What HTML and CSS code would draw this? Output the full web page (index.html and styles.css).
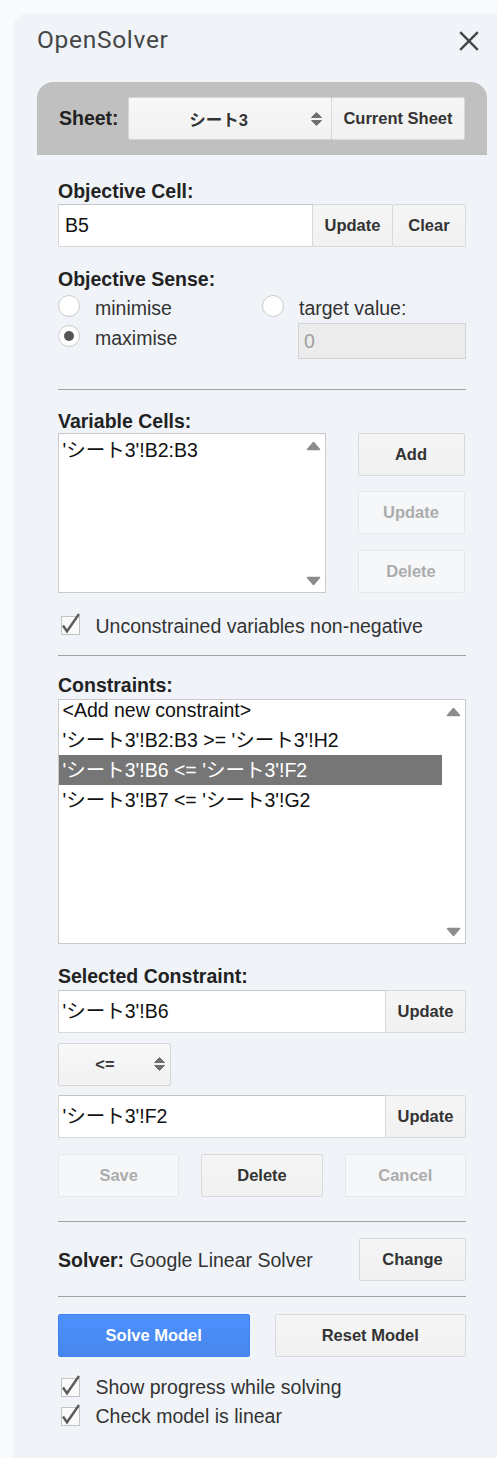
FILE: index.html
```html
<!DOCTYPE html>
<html lang="ja">
<head>
<meta charset="utf-8">
<title>OpenSolver</title>
<link rel="stylesheet" href="styles.css">
</head>
<body>
<div class="page">
  <div class="panel">
    <header class="titlebar">
      <h1 class="title">OpenSolver</h1>
      <svg class="close" width="20" height="20" viewBox="0 0 20 20"><path d="M1.2 1.2L18.8 18.8M18.8 1.2L1.2 18.8" stroke="#444746" stroke-width="2.4" fill="none"/></svg>
    </header>

    <div class="sheetbar">
      <span class="sheet-label">Sheet:</span>
      <div class="select sheet-select">
        <span class="select-text">シート3</span>
        <svg class="sel-arrows" width="13" height="16" viewBox="0 0 13 16"><path d="M6.5 1.5L11.5 6.5L1.5 6.5Z M1.5 9.5L11.5 9.5L6.5 14.5Z" fill="#707070" stroke="#707070" stroke-width="1" stroke-linejoin="round"/></svg>
      </div>
      <button class="btn sheet-btn">Current Sheet</button>
    </div>

    <main class="content">
      <div class="label">Objective Cell:</div>
      <div class="field-row obj-row">
        <div class="input input-b5">B5</div>
        <button class="btn w81">Update</button>
        <button class="btn w74">Clear</button>
      </div>

      <div class="label sense-label">Objective Sense:</div>
      <div class="sense">
        <div class="opt"><span class="radio"></span><span class="opt-text">minimise</span></div>
        <div class="opt"><span class="radio"></span><span class="opt-text">target value:</span></div>
        <div class="opt"><span class="radio checked"></span><span class="opt-text">maximise</span></div>
        <div class="target-input">0</div>
      </div>

      <hr class="divider d1">

      <div class="label var-label">Variable Cells:</div>
      <div class="var-row">
        <div class="listbox var-list">
          <div class="items var-items">
            <div class="item">'シート3'!B2:B3</div>
          </div>
          <div class="scroll">
            <svg width="15" height="10" viewBox="0 0 15 10"><path d="M7.5 1.5L13.5 8.5L1.5 8.5Z" fill="#8c8c8c" stroke="#8c8c8c" stroke-width="1.6" stroke-linejoin="round"/></svg>
            <svg width="15" height="10" viewBox="0 0 15 10"><path d="M1.5 1.5L13.5 1.5L7.5 8.5Z" fill="#8c8c8c" stroke="#8c8c8c" stroke-width="1.6" stroke-linejoin="round"/></svg>
          </div>
        </div>
        <div class="var-buttons">
          <button class="btn">Add</button>
          <button class="btn disabled">Update</button>
          <button class="btn disabled">Delete</button>
        </div>
      </div>

      <div class="check check-single">
        <svg class="cb" width="22" height="24" viewBox="0 0 22 24"><rect x="1.5" y="5.5" width="18" height="18" fill="#fafafa" stroke="#c4c4c4"/><path d="M3 14.5L7 20.3L19 3" fill="none" stroke="#5c5c5c" stroke-width="2.4"/></svg>
        <span class="opt-text">Unconstrained variables non-negative</span>
      </div>

      <hr class="divider d2">

      <div class="label con-label">Constraints:</div>
      <div class="listbox con-list">
        <div class="items con-items">
          <div class="item">&lt;Add new constraint&gt;</div>
          <div class="item">'シート3'!B2:B3 &gt;= 'シート3'!H2</div>
          <div class="item selected">'シート3'!B6 &lt;= 'シート3'!F2</div>
          <div class="item">'シート3'!B7 &lt;= 'シート3'!G2</div>
        </div>
        <div class="scroll">
          <svg width="15" height="10" viewBox="0 0 15 10"><path d="M7.5 1.5L13.5 8.5L1.5 8.5Z" fill="#8c8c8c" stroke="#8c8c8c" stroke-width="1.6" stroke-linejoin="round"/></svg>
          <svg width="15" height="10" viewBox="0 0 15 10"><path d="M1.5 1.5L13.5 1.5L7.5 8.5Z" fill="#8c8c8c" stroke="#8c8c8c" stroke-width="1.6" stroke-linejoin="round"/></svg>
        </div>
      </div>

      <div class="label sel-label">Selected Constraint:</div>
      <div class="field-row">
        <div class="input input-ref">'シート3'!B6</div>
        <button class="btn w81">Update</button>
      </div>
      <div class="select op-select">
        <span class="select-text">&lt;=</span>
        <svg class="sel-arrows op-arrows" width="13" height="16" viewBox="0 0 13 16"><path d="M6.5 1.5L11.5 6.5L1.5 6.5Z M1.5 9.5L11.5 9.5L6.5 14.5Z" fill="#707070" stroke="#707070" stroke-width="1" stroke-linejoin="round"/></svg>
      </div>
      <div class="field-row rhs-row">
        <div class="input input-ref">'シート3'!F2</div>
        <button class="btn w81">Update</button>
      </div>
      <div class="triple">
        <button class="btn disabled">Save</button>
        <button class="btn">Delete</button>
        <button class="btn disabled">Cancel</button>
      </div>

      <hr class="divider d3">

      <div class="solver-row">
        <span class="solver-text"><b class="solver-key">Solver:</b> Google Linear Solver</span>
        <button class="btn change-btn">Change</button>
      </div>

      <hr class="divider d4">

      <div class="double">
        <button class="btn action">Solve Model</button>
        <button class="btn">Reset Model</button>
      </div>

      <div class="check-group">
        <div class="check check-tight">
          <svg class="cb" width="22" height="24" viewBox="0 0 22 24"><rect x="1.5" y="5.5" width="18" height="18" fill="#fafafa" stroke="#c4c4c4"/><path d="M3 14.5L7 20.3L19 3" fill="none" stroke="#5c5c5c" stroke-width="2.4"/></svg>
          <span class="opt-text">Show progress while solving</span>
        </div>
        <div class="check check-tight">
          <svg class="cb" width="22" height="24" viewBox="0 0 22 24"><rect x="1.5" y="5.5" width="18" height="18" fill="#fafafa" stroke="#c4c4c4"/><path d="M3 14.5L7 20.3L19 3" fill="none" stroke="#5c5c5c" stroke-width="2.4"/></svg>
          <span class="opt-text">Check model is linear</span>
        </div>
      </div>
    </main>
  </div>
</div>
</body>
</html>
```

FILE: styles.css
```css
* { box-sizing: border-box; }

html, body { margin: 0; }

body {
  background: #f8fafd;
  font-family: "Liberation Sans", Arial, "Noto Sans CJK JP", sans-serif;
  font-size: 19.5px;
  color: #333;
}

.page { padding: 13px 0 0 13px; }

.panel {
  background: #f0f4f9;
  border-radius: 16px 0 0 0;
  min-height: 1445px;
  padding: 0 10px 0 24px;
}

.titlebar {
  height: 55px;
  display: flex;
  align-items: center;
  justify-content: space-between;
  padding-right: 8px;
}

.title {
  margin: 0;
  font-family: Roboto, "Open Sans", sans-serif;
  font-weight: 400;
  font-size: 24.5px;
  line-height: 1;
  letter-spacing: 0.7px;
  color: #444746;
}

.close { display: block; }

.sheetbar {
  margin-top: 14px;
  height: 73px;
  background: #c0c0c0;
  border-radius: 16px 16px 0 0;
  padding: 15px 22px 0 22px;
  display: flex;
  align-items: flex-start;
}

.sheet-label {
  width: 69px;
  flex: none;
  height: 43px;
  line-height: 43px;
  font-weight: bold;
  color: #222;
}

.select {
  height: 43px;
  display: flex;
  align-items: center;
  background: linear-gradient(#f8f8f8, #f1f1f1);
  border: 1px solid #d6d6d6;
  border-radius: 2px;
  font-weight: bold;
  font-size: 16.5px;
  color: #333;
}

.sheet-select { width: 204px; flex: none; }

.select-text { flex: 1; text-align: center; }

.sel-arrows { display: block; margin: 0 8px 0 2px; flex: none; }

.op-select { width: 113px; margin-top: 10px; }

.op-arrows { margin: 0 4px 0 2px; }

.btn {
  height: 43px;
  padding: 0 6px;
  background: linear-gradient(#f5f5f5, #f1f1f1);
  border: 1px solid #d9d9d9;
  border-radius: 2px;
  font-family: "Liberation Sans", Arial, sans-serif;
  font-weight: bold;
  font-size: 16.5px;
  color: #333;
  flex: none;
}

.btn.disabled {
  background: #f6f7f9;
  border-color: #e6e7e9;
  color: #acacac;
}

.btn.action {
  background: linear-gradient(#4d90fe, #4787ed);
  border-color: #3d82f0;
  color: #fff;
}

.sheet-btn { width: 134px; margin-left: -1px; }

.content { margin: 0 21px; padding-top: 25px; padding-bottom: 20px; }

.label {
  font-weight: bold;
  line-height: 22px;
  color: #222;
}

.field-row {
  display: flex;
  height: 43px;
  margin-top: 3px;
}

.obj-row { margin-top: 2px; }

.field-row .btn { margin-left: -1px; }

.w81 { width: 81px; }
.w74 { width: 74px; }

.input {
  flex: 1;
  min-width: 0;
  height: 43px;
  background: #fff;
  border: 1px solid #d9d9d9;
  border-top-color: #c6c6c6;
  line-height: 41px;
  color: #111;
  white-space: nowrap;
}

.input-b5 { padding-left: 6px; }
.input-ref { padding-left: 3.5px; }

.rhs-row { margin-top: 9px; }

.sense-label { margin-top: 21px; }

.sense {
  margin-top: 2.5px;
  display: grid;
  grid-template-columns: 204px 1fr;
}

.opt {
  display: flex;
  align-items: flex-start;
  height: 30px;
}

.radio {
  width: 22px;
  height: 22px;
  margin-top: 2.5px;
  border-radius: 50%;
  background: #fff;
  border: 1px solid #cbcbcb;
  flex: none;
  display: flex;
  align-items: center;
  justify-content: center;
}

.radio.checked::after {
  content: "";
  width: 10px;
  height: 10px;
  border-radius: 50%;
  background: #555;
}

.opt-text {
  margin-left: 15px;
  line-height: 30px;
  color: #333;
  white-space: nowrap;
}

.target-input {
  margin-left: 36px;
  height: 36.5px;
  background: #ececec;
  border: 1px solid #d2d2d2;
  padding-left: 5px;
  line-height: 34.5px;
  color: #a0a0a0;
}

.divider {
  border: 0;
  height: 1px;
  background: #a2a2a2;
  margin: 0;
}

.d1 { margin-top: 30px; }
.d2 { margin-top: 14px; }
.d3 { margin-top: 24px; }
.d4 { margin-top: 15px; }

.var-label { margin-top: 19.5px; margin-bottom: 1px; }

.var-row { display: flex; }

.listbox {
  background: #fff;
  border: 1px solid #c9c9c9;
  display: flex;
  overflow: hidden;
}

.var-list { width: 268px; height: 160px; }

.items { flex: 1; min-width: 0; }

.var-items { padding-top: 1.5px; }

.con-items { margin-top: -5px; }

.item {
  height: 30px;
  line-height: 30px;
  padding-left: 3.5px;
  color: #111;
  white-space: nowrap;
}

.item.selected { background: #767676; color: #fff; }

.scroll {
  width: 23px;
  flex: none;
  display: flex;
  flex-direction: column;
  justify-content: space-between;
  align-items: flex-end;
  padding: 7px 4px 6px 0;
}

.scroll svg { display: block; }

.var-buttons {
  margin-left: auto;
  margin-right: 1.5px;
  width: 107px;
  display: flex;
  flex-direction: column;
  justify-content: space-between;
}

.var-buttons .btn { width: 107px; }

.check {
  display: flex;
  align-items: flex-start;
  height: 30px;
}

.check .cb { display: block; margin-left: 1.5px; flex: none; }

.check .opt-text { margin-left: 14px; }

.check-single { margin-top: 18px; }

.check-tight { height: 29.5px; }
.check-tight .opt-text { line-height: 29.5px; }

.check-group { margin-top: 16px; }

.con-label { margin-top: 18px; margin-bottom: 3px; }

.con-list { height: 245px; }

.sel-label { margin-top: 21px; }

.triple {
  margin-top: 16px;
  display: grid;
  grid-template-columns: repeat(3, 1fr);
  gap: 22px;
}

.triple .btn, .double .btn { width: 100%; }

.solver-row {
  margin-top: 16.5px;
  display: flex;
  align-items: center;
}

.solver-text { color: #333; line-height: 22px; }

.solver-key { color: #222; }

.change-btn { margin-left: auto; width: 107px; }

.double {
  margin-top: 16.5px;
  display: grid;
  grid-template-columns: 1fr 1fr;
  gap: 25px;
}
```
